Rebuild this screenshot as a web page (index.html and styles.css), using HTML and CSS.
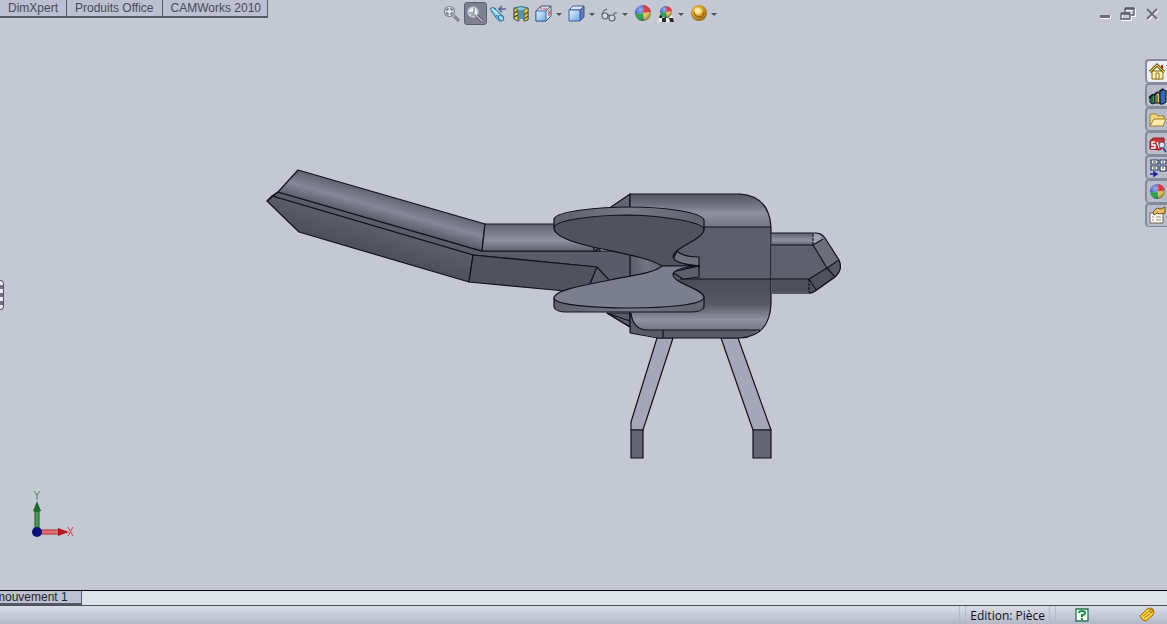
FILE: index.html
```html
<!DOCTYPE html>
<html lang="fr">
<head>
<meta charset="utf-8">
<title>Pièce</title>
<link rel="stylesheet" href="styles.css">
</head>
<body class="app">
<svg class="defs" width="0" height="0" aria-hidden="true">
  <defs>
    <linearGradient id="glass" x1="0" y1="0" x2="1" y2="1"><stop offset="0" stop-color="#e8f5ff"/><stop offset="1" stop-color="#69a5df"/></linearGradient>
    <radialGradient id="gold" cx=".4" cy=".35" r=".7"><stop offset="0" stop-color="#fff0a0"/><stop offset=".4" stop-color="#dda936"/><stop offset="1" stop-color="#8d6512"/></radialGradient>
    <radialGradient id="shine" cx=".35" cy=".3" r=".7"><stop offset="0" stop-color="#fff" stop-opacity=".5"/><stop offset=".5" stop-color="#fff" stop-opacity="0"/><stop offset="1" stop-color="#123" stop-opacity=".4"/></radialGradient>
    <symbol id="ball" viewBox="0 0 16 16">
      <path d="M8 8V0A8 8 0 0 0 0 9Z" fill="#3f68d0"/>
      <path d="M8 8V0A8 8 0 0 1 16 7Z" fill="#d6323e"/>
      <path d="M8 8L16 7A8 8 0 0 1 9 16Z" fill="#e6bf58"/>
      <path d="M8 8L0 9A8 8 0 0 0 9 16Z" fill="#2b9c48"/>
      <circle cx="8" cy="8" r="8" fill="url(#shine)"/>
    </symbol>
  </defs>
</svg>

<main class="viewport">
  <svg class="scene" viewBox="0 0 1167 590" role="img" aria-label="Modèle 3D">
    <defs>
      <linearGradient id="tailTop" gradientUnits="userSpaceOnUse" x1="390" y1="197" x2="383" y2="222"><stop offset="0" stop-color="#646675"/><stop offset=".5" stop-color="#85879a"/><stop offset="1" stop-color="#5c5e6b"/></linearGradient>
      <linearGradient id="tailLow" gradientUnits="userSpaceOnUse" x1="378" y1="227" x2="370" y2="253"><stop offset="0" stop-color="#5c5e6b"/><stop offset="1" stop-color="#4d4f5a"/></linearGradient>
      <linearGradient id="midTop" x1="0" y1="0" x2="0" y2="1"><stop offset="0" stop-color="#5f616f"/><stop offset=".6" stop-color="#9092a3"/><stop offset="1" stop-color="#5f616e"/></linearGradient>
      <linearGradient id="bodyTop" x1="0" y1="0" x2="0" y2="1"><stop offset="0" stop-color="#555765"/><stop offset=".3" stop-color="#6d6f7e"/><stop offset=".58" stop-color="#9092a3"/><stop offset="1" stop-color="#727483"/></linearGradient>
      <linearGradient id="bodyLow" x1="0" y1="0" x2="0" y2="1"><stop offset="0" stop-color="#494b55"/><stop offset=".5" stop-color="#585a66"/><stop offset=".8" stop-color="#9092a3"/><stop offset="1" stop-color="#737584"/></linearGradient>
      <linearGradient id="neck" x1="0" y1="0" x2="1" y2="0"><stop offset="0" stop-color="#5a5c69"/><stop offset=".4" stop-color="#737583"/><stop offset="1" stop-color="#565864"/></linearGradient>
      <linearGradient id="edge" x1="0" y1="0" x2="1" y2="0"><stop offset="0" stop-color="#5e606d"/><stop offset=".5" stop-color="#777986"/><stop offset="1" stop-color="#60626f"/></linearGradient>
    </defs>
    <g class="ink">
      <path fill="#5a5c69" d="M272 196L278 192L481 251H596L640 251V290L597 267L473 255Z"/>
      <path fill="url(#tailTop)" d="M298 170L485 224L482 251L278 192Z"/>
      <path fill="url(#tailLow)" d="M267 201L272 196L473 255L469 282L299 232Z"/>
      <path fill="url(#midTop)" d="M485 224H600V251H482Z"/>
      <path fill="#50525e" d="M473 255L597 267L589 291H565L469 282Z"/>
      <path fill="none" d="M278 192L267 201"/>
      <path fill="#62646f" d="M611 207L630 194V210H611Z"/>
      <path fill="#5a5c69" d="M607 313L630 327V313Z"/>
      <path fill="none" d="M607 313L630 321"/>
    </g>
    <path fill="#5a5c69" d="M594 252H630V280L611 290H589L597 266Z"/>
    <path class="line" d="M593 247L595 251L601 247M597 267L609 280M597 267L589 286"/>

    <g class="ink">
      <path fill="#a4a7b8" d="M657 338H673L643 430H631V422Z"/>
      <path fill="#636574" d="M631 430H643V458H631Z"/>
      <path fill="#a4a7b8" d="M721 338H738L771 430H753Z"/>
      <path fill="#636574" d="M753 430H771V458H753Z"/>
    </g>

    <path fill="#5c5e6c" d="M630 227H771V279H630Z"/>
    <path fill="url(#bodyTop)" d="M630 194H740Q769 196 771 227H630Z"/>
    <path fill="url(#bodyLow)" d="M630 279H771V305Q770 322 759 330H630Z"/>
    <path fill="#595b68" d="M630 313H631Q633 330 648 330H759Q751 338 740 338H662L630 333Z"/>
    <path fill="url(#neck)" d="M630 250H672V282H630Z"/>
    <path class="line" d="M630 333V194H740Q769 196 771 227V305Q769 336 740 338H658L630 333M690 227H771M680 279H771M631 313Q633 330 648 330H760M663 330V338M607 313L630 327"/>

    <path fill="url(#midTop)" d="M772 233H813V245H772Z"/>
    <path fill="#5e606d" d="M772 245H813L827 268L809 279H772Z"/>
    <path fill="#4f515c" d="M772 279H809L827 268L835 278L815 292Q812 294 809 294H772Z"/>
    <path fill="#6d6f7d" d="M813 245V233Q821 232 825 238L839 260L827 268Z"/>
    <path fill="#a1a3b2" d="M813 245V233Q820 233 823 239Z"/>
    <path fill="#565864" d="M827 268L839 260Q844 268 835 278Z"/>
    <path class="line" d="M771 233H815Q822 233 825 238L839 260Q843 269 836 276L815 291Q812 293 809 293M771 245H813L827 268L809 279H771M813 245L823 239M827 268L839 260M827 268L835 277M809 279L816 290"/>
    <path class="line dashed" d="M813 245V233M809 279V293"/>
    <path stroke="#62646f" fill="none" d="M772 293H809"/>

    <g class="ink">
      <path fill="url(#edge)" d="M554 228V219C556 211 600 207 629 207C665 207 701 212 704 220V230Z"/>
      <path fill="#70727f" d="M677 251Q683 257 699 257V266L672 262Z"/>
      <path fill="#50525d" d="M554 228C554 220 595 215 629 215C665 216 702 222 704 229C704 240 673 247 673 257C674 262 686 265 699 266H662C650 258 620 253 593 247C571 242 554 236 554 228Z"/>
      <path fill="#5d5f6b" d="M699 266V277L683 279L672 272Z"/>
      <path fill="url(#edge)" d="M554 298V307Q555 312 567 312H690Q703 312 704 307V296Z"/>
      <path fill="#7b7e8e" d="M662 266C654 273 635 275 610 280C585 285 554 290 554 298C554 305 595 308 629 308C665 308 704 305 704 297C702 288 673 284 673 274C674 269 686 267 699 266Z"/>
    </g>
  </svg>

  <svg class="triad" viewBox="0 0 60 56" aria-label="Repère">
    <path d="M14 22h4v22h-4Z" fill="#4c9a55" stroke="#1f5d27"/>
    <path d="M16 13L20 23Q16 25 12 23Z" fill="#1c6a29"/>
    <path d="M16 42h24v4H16Z" fill="#e0747a" stroke="#b3282e"/>
    <path d="M37 40L48 44L37 48Z" fill="#b3181d"/>
    <circle cx="16" cy="44" r="5" fill="#10127c"/>
    <path d="M13 3L16 7L19 3M16 7V12" class="axis-y"/>
    <path d="M47 39L52 48M52 39L47 48" class="axis-x"/>
  </svg>

  <header class="topbar">
    <nav class="tabs">
      <button class="tab">DimXpert</button>
      <button class="tab">Produits Office</button>
      <button class="tab">CAMWorks 2010</button>
    </nav>
    <div class="toolbar" role="toolbar">
      <button class="tool" aria-label="Zoom au mieux"><svg class="icon" viewBox="0 0 20 20"><circle cx="7.500" cy="7.500" r="5" fill="#dfe5ec" stroke="#7b818d" stroke-width="1.200"/><path d="M5 7V5h2M8 5h2v2M5 8v2h2M8 10h2V8" fill="none" stroke="#4a505d"/><path d="M12 12l5 5" stroke="#6b6f82" stroke-width="3"/><path d="M12 12l5 5" stroke="#c6aaa0"/></svg></button>
      <button class="tool pressed" aria-label="Zoom fenêtre"><svg class="icon" viewBox="0 0 20 20"><circle cx="8" cy="8" r="5" fill="#eef3f8" stroke="#b9c1cf" stroke-width="1.500"/><path d="M9 4v5H4M6 11h5" fill="none" stroke="#59606e"/><path d="M12 12l5 5" stroke="#474a59" stroke-width="3"/><path d="M12 12l5 5" stroke="#d9d3d5" stroke-width="1.300"/></svg></button>
      <button class="tool" aria-label="Vue précédente"><svg class="icon" viewBox="0 0 20 20"><path d="M2 5L5 3L15 12Q17 15 14 17Q11 18 9 15Z" fill="#6fc3e2" stroke="#3e7fa8"/><path d="M3 8L8 4M7 13L12 9" stroke="#2d7198"/><path d="M4 5L12 12" stroke="#d8f4ff" stroke-width="1.500"/><ellipse cx="13" cy="14" rx="3" ry="2" transform="rotate(45 13 14)" fill="#a8e0f7" stroke="#387aa5"/><path d="M18 5H11M14 2L11 5L14 8" fill="none" stroke="#5966a5" stroke-width="1.600"/></svg></button>
      <button class="tool" aria-label="Vue en coupe"><svg class="icon" viewBox="0 0 20 20"><path d="M3 4Q10 1 17 4V16L13 17V7H8V17L3 15Z" fill="#8dc7dc" stroke="#396a84"/><path d="M3 4L7 6V17L3 15ZM13 6L17 4V16L13 17Z" fill="#efd54d" stroke="#5f6136"/><path d="M3 9l4-2M3 13l4-2M13 11l4-3M13 15l4-3" stroke="#54563e" stroke-width="1.500"/><path d="M8 7h4v8H8Z" fill="#4d98b8"/></svg></button>
      <button class="tool drop" aria-label="Orientation"><svg class="icon" viewBox="0 0 20 20"><path d="M2 7L7 2H17V12L12 17H2Z" fill="#d9dfe9" stroke="#4a5268"/><path d="M2 7h10v10H2Z" fill="url(#glass)" stroke="#3d6fad"/><path d="M12 7L17 2" stroke="#4a5268"/><path d="M7 6V3M9 5h4M15 6v6M14 9h3" stroke="#b35460"/></svg><span class="arrow"></span></button>
      <button class="tool drop" aria-label="Style d'affichage"><svg class="icon" viewBox="0 0 20 20"><path d="M2 6L6 2H17L13 6Z" fill="#d9e8fa" stroke="#3f5d9e"/><path d="M13 6L17 2V13L13 17Z" fill="#5f7bc4" stroke="#3f5394"/><path d="M2 6h11v11H2Z" fill="url(#glass)" stroke="#3f5d9e"/></svg><span class="arrow"></span></button>
      <button class="tool drop" aria-label="Cacher et montrer"><svg class="icon" viewBox="0 0 20 20"><g fill="#d4d8e0" stroke="#5d6474" stroke-width="1.200"><circle cx="5" cy="12" r="3"/><circle cx="12" cy="14" r="3"/><path d="M2 11Q3 6 7 5M8 12Q9 10 10 12M14 11Q14 8 17 9" fill="none"/></g></svg><span class="arrow"></span></button>
      <button class="tool" aria-label="Apparence"><svg class="icon" viewBox="0 0 20 20"><use href="#ball" x="2" y="1" width="16" height="16"/></svg></button>
      <button class="tool drop" aria-label="Scène"><svg class="icon" viewBox="0 0 20 20"><path d="M4 11h12l2 7H2Z" fill="#eef0ee"/><path d="M4 11h3l-1 3H3ZM10 11h3v3h-3ZM6 14h4v4H6ZM13 14h4l1 4h-4Z" fill="#242a2c"/><use href="#ball" x="4" y="2" width="12" height="12"/></svg><span class="arrow"></span></button>
      <button class="tool drop" aria-label="Paramètres d'affichage"><svg class="icon" viewBox="0 0 20 20"><circle cx="10" cy="9" r="8" fill="url(#gold)"/><path d="M5 7Q5 12 9 13Q14 14 15 8" fill="none" stroke="#7d5610"/><ellipse cx="9" cy="7" rx="4" ry="3" fill="#fff3b4" opacity=".6"/></svg><span class="arrow"></span></button>
    </div>
    <div class="window-controls">
      <button class="win" aria-label="Réduire"><svg class="icon" viewBox="0 0 20 20"><path d="M6 11h11v4H6Z" fill="#f5f7fa"/><path d="M6 11h10v3H6Z" fill="#6a6e7c"/></svg></button>
      <button class="win" aria-label="Restaurer"><svg class="icon" viewBox="0 0 20 20"><g fill="none"><path d="M9 6h9v6h-3M5 10h9v6H5Z" stroke="#f5f7fa" stroke-width="2"/><path d="M8 8V5h9v6h-3M8 4h9M4 10h9v5H4ZM4 9h9" stroke="#565a69" stroke-width="1.300"/></g></svg></button>
      <button class="win" aria-label="Fermer"><svg class="icon" viewBox="0 0 20 20"><path d="M8 6l10 10M18 6L8 16" stroke="#f5f7fa" stroke-width="2"/><path d="M7 5l10 10M17 5L7 15" stroke="#6a6e7c" stroke-width="2"/></svg></button>
    </div>
  </header>

  <nav class="taskpane">
    <button class="pane active" aria-label="Ressources"><svg class="icon" viewBox="0 0 20 20"><path d="M14 3h2v6h-2Z" fill="#b5232e"/><path d="M5 9h11v8H5Z" fill="#fff3a1" stroke="#7c6b18"/><path d="M3 10L10 3L17 10" fill="none" stroke="#715e12" stroke-width="3"/><path d="M3 10L10 3L17 10" fill="none" stroke="#ffdf5c"/><path d="M9 11h3v6H9Z" fill="#fbfbdc" stroke="#8b7619"/></svg></button>
    <button class="pane" aria-label="Bibliothèque"><svg class="icon" viewBox="0 0 20 20"><path d="M3 10l3-2l2 2v7l-3 1l-2-2Z" fill="#36a35a" stroke="#111"/><path d="M8 8l2-2l3 2v9H8Z" fill="#e4ca63" stroke="#111"/><path d="M13 5l3-2l3 2v11l-3 2h-3Z" fill="#3767b7" stroke="#111"/><path d="M2 12l4-3M7 9l4-3M12 6l4-3" stroke="#101b35" stroke-width="2"/><path d="M5 11v6M10 9v8" stroke="#101b35"/></svg></button>
    <button class="pane" aria-label="Explorateur"><svg class="icon" viewBox="0 0 20 20"><path d="M3 16V5l2-1h4l2 2h6v3" fill="#f4d77b" stroke="#9c7e27"/><path d="M3 16L7 9H19L16 16Z" fill="#ffebaa" stroke="#9c7e27"/></svg></button>
    <button class="pane" aria-label="Recherche"><svg class="icon" viewBox="0 0 20 20"><path d="M3 7l3-3h11v9l-4 3L3 15Z" fill="#c53037" stroke="#8e1e27"/><path d="M8 8H5v3h3v3H4M10 8l2 5l2-5" fill="none" stroke="#fff" stroke-width="1.400"/><circle cx="15" cy="11" r="3" fill="#d3e4f3" stroke="#505a77"/><path d="M16 14l3 4" stroke="#36457e" stroke-width="2"/></svg></button>
    <button class="pane" aria-label="Palette de vues"><svg class="icon" viewBox="0 0 20 20"><g fill="#fffbe0" stroke="#273a69" stroke-width="1.200"><path d="M4 2h7v4H4ZM13 2h6v4h-6ZM4 8h7v4H4ZM13 8h6v5h-6Z"/><path d="M6 4h3M15 4h2M6 10h3M15 10h2"/></g><path d="M3 16h6M7 14l3 2l-3 2Z" fill="#172ca2" stroke="#172ca2" stroke-width="1.500"/></svg></button>
    <button class="pane" aria-label="Apparences"><svg class="icon" viewBox="0 0 20 20"><use href="#ball" x="3" y="2" width="15" height="15"/></svg></button>
    <button class="pane" aria-label="Propriétés"><svg class="icon" viewBox="0 0 20 20"><path d="M3 7h13v10H3Z" fill="#fffaf0" stroke="#6d665e"/><path d="M5 11h2M9 11h5M5 14h2M9 14h5" stroke="#8f8780"/><path d="M6 6L10 2L14 3L18 1V7L13 8L10 7L7 9Z" fill="#edbd6c" stroke="#76521f"/></svg></button>
  </nav>

  <button class="handle" aria-label="Panneau"><span class="notch"></span><span class="notch"></span><span class="notch"></span></button>
</main>

<nav class="motion">
  <button class="motion-tab">mouvement 1</button>
</nav>

<footer class="status">
  <span class="cell narrow"></span>
  <span class="cell label">Edition: Pièce</span>
  <span class="cell narrow"></span>
  <span class="cell help"><button class="status-button" aria-label="Aide"><svg class="icon-small" viewBox="0 0 16 16"><path d="M2 2h12v12H2Z" fill="#f4fff2" stroke="#28745a" stroke-width="1.300"/><path d="M5 6Q5 4 8 4Q11 4 11 6Q11 8 8 8V10M8 11V13" fill="none" stroke="#16954a" stroke-width="2"/></svg></button></span>
  <button class="status-button" aria-label="Étiquettes"><svg class="icon-small" viewBox="0 0 16 16"><path d="M1 9L8 2Q12 0 14 2Q16 5 14 8L7 14Q3 14 1 9Z" fill="#f8ce3a" stroke="#9b6814"/><circle cx="12" cy="4" r="1.400" fill="#fff3c4" stroke="#8a5d13"/><path d="M4 9L9 5M5 11L11 7" stroke="#b2801b"/></svg></button>
</footer>
</body>
</html>
```

FILE: styles.css
```css
* { box-sizing: border-box; }

.app {
  margin: 0;
  min-height: 100vh;
  display: flex;
  flex-direction: column;
  background: #c4c8d3;
  font-family: "Liberation Sans", Arial, sans-serif;
  font-size: 12px;
  color: #23242c;
}

button {
  margin: 0;
  padding: 0;
  border: 0;
  background: none;
  font: inherit;
  color: inherit;
}

svg { display: block; }
.defs { position: absolute; }

.viewport {
  position: relative;
  flex: 1;
  display: flex;
  flex-direction: column;
  overflow: hidden;
}

.scene {
  position: absolute;
  inset: 0;
  width: 100%;
  height: 100%;
}

.ink, .line { stroke: #10121c; stroke-width: 1.2; stroke-linejoin: round; }
.line { fill: none; }
.dashed { stroke-dasharray: 3 1; }

.triad {
  position: absolute;
  left: 21px;
  bottom: 46px;
  width: 60px;
  height: 56px;
  overflow: visible;
}

.axis-y { fill: none; stroke: #35914a; }
.axis-x { fill: none; stroke: #dc3c46; }

.topbar {
  position: relative;
  display: grid;
  grid-template-columns: 1fr auto 1fr;
  align-items: start;
  padding-right: 6px;
}

.tabs { display: flex; }

.tab {
  height: 18px;
  padding: 0 8px 2px;
  border-right: 1px solid #555968;
  border-bottom: 2px solid #555968;
  background: #bbc0d2;
  color: #484a56;
  line-height: 16px;
}

.tab:last-child { padding-right: 6px; }

.toolbar { display: flex; padding-top: 2px; }

.tool {
  display: flex;
  align-items: center;
  justify-content: center;
  width: 23px;
  height: 23px;
}

.drop { width: 33px; }

.pressed {
  border: 1px solid #5b5e6e;
  border-radius: 3px;
  background: #7d8091;
}

.icon { flex: none; width: 20px; height: 20px; }

.arrow {
  margin: 2px 2px 0 2px;
  border: 3px solid transparent;
  border-top-color: #4f5364;
  border-bottom: 0;
}

.window-controls {
  display: flex;
  justify-content: flex-end;
  padding-top: 4px;
}

.win {
  display: flex;
  justify-content: center;
  width: 23px;
}

.taskpane {
  position: relative;
  align-self: flex-end;
  margin-top: 34px;
}

.pane {
  display: flex;
  align-items: center;
  width: 22px;
  height: 24px;
  border: 2px solid #858a9d;
  border-right: 0;
  border-bottom-width: 1px;
  border-radius: 4px 0 0 4px;
  background: #b9bdcb;
}

.active { background: #eceef3; }

.handle {
  position: absolute;
  left: 0;
  top: 50%;
  display: grid;
  gap: 4px;
  width: 4px;
  padding: 4px 0;
  border: 1px solid #51556b;
  border-left: 0;
  border-radius: 0 4px 4px 0;
  background: #eceef4;
  transform: translateY(-50%);
}

.notch { height: 4px; background: #6d7188; }

.motion {
  display: flex;
  height: 15px;
  border-top: 1px solid #08090c;
  background: #dfe3ea;
}

.motion-tab {
  margin-left: -12px;
  padding: 0 13px 0 7px;
  border-right: 1px solid #555968;
  border-bottom: 2px solid #555968;
  background: #bbc0d2;
  line-height: 12px;
}

.status {
  display: flex;
  align-items: center;
  justify-content: flex-end;
  height: 19px;
  padding-right: 12px;
  border-top: 1px solid #4b4f59;
  background: linear-gradient(#d9dde8, #b4b9ca);
  color: #101116;
  font-family: "Open Sans", "Noto Sans", sans-serif;
}

.cell {
  display: flex;
  align-items: center;
  height: 18px;
  border-left: 1px solid #b6bac9;
}

.narrow { width: 6px; }
.label { padding: 0 4px; }
.help { width: 84px; padding-left: 18px; }
.icon-small { width: 16px; height: 16px; }
```
